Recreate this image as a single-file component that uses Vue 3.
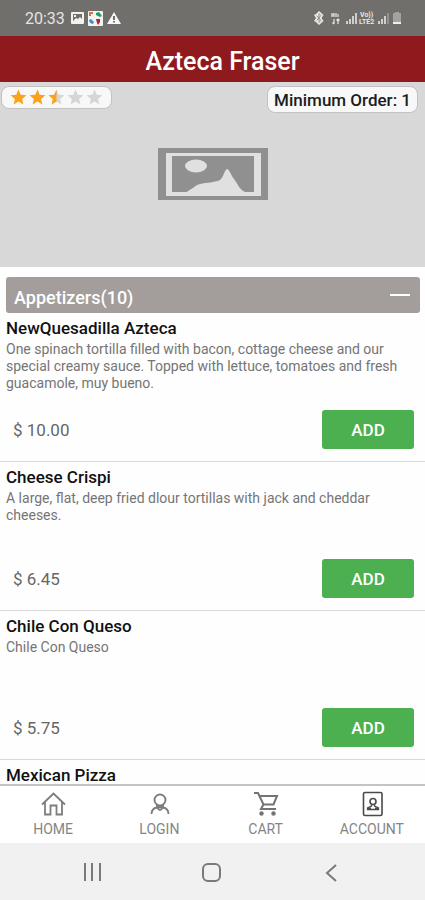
<script setup>
import { ref } from 'vue'

const open = ref(true)
const stars = ['full', 'full', 'half', 'empty', 'empty']
const items = [
  {
    name: 'NewQuesadilla Azteca',
    text: 'One spinach tortilla filled with bacon, cottage cheese and our special creamy sauce. Topped with lettuce, tomatoes and fresh guacamole, muy bueno.',
    price: '10.00',
  },
  {
    name: 'Cheese Crispi',
    text: 'A large, flat, deep fried dlour tortillas with jack and cheddar cheeses.',
    price: '6.45',
  },
  { name: 'Chile Con Queso', text: 'Chile Con Queso', price: '5.75' },
  { name: 'Mexican Pizza', text: '', price: '' },
]
</script>

<template>
  <div class="app">
    <div class="status">
      <span class="clock">20:33</span>
      <svg class="s-pic" width="13" height="12" viewBox="0 0 13 12">
        <path fill="#f2f2f2" fill-rule="evenodd" d="M1 0h11q1 0 1 1v10q0 1-1 1H1q-1 0-1-1V1q0-1 1-1zM2 2v7h9V2z" />
        <path fill="#f2f2f2" d="M2 9l3-3 2 1 2-2 2 2v2zM3 3h2v2H3z" />
      </svg>
      <svg class="s-app" width="15" height="15" viewBox="0 0 15 15">
        <rect width="15" height="15" rx="1" fill="#f4f4f2" />
        <path fill="#e2694b" d="M1 1h4v2H3v2H1z" />
        <path fill="#1e9a6c" d="M8 2l3-1 3 4-2 1-4-2z" />
        <path fill="#3f8fc8" d="M1 9l2-1 3 3-1 2-3-1z" />
        <path fill="#b3222e" d="M8 8h4v3l-2 3-1-2z" />
      </svg>
      <svg class="s-warn" width="14" height="12" viewBox="0 0 14 12">
        <path fill="#f7f7f7" d="M7 0l7 12H0z" />
        <path fill="#706f6c" d="M6 4h2v4H6zM6 9h2v1.500H6z" />
      </svg>
      <span class="gap"></span>
      <svg width="91" height="14" viewBox="0 0 91 14">
        <path fill="#ececec" d="M7 0l4.500 4-2 3 2 3L7 14l-3-3-2-1 2-3-2-3 2-1z" />
        <path fill="none" stroke="#8f8e8b" d="M4.500 4.500l4.500 5-2 2v-9l2 2-4.500 5" />
        <g fill="none" stroke="#e6e6e6">
          <path stroke-width="1.200" d="M20 2v4M22 2v4M20 4h2M24 2v4M26 3v3M22 8v5M20.500 11.500L22 13M26 13V8M24.500 9.500L26 8l1.500 1.500" />
          <path stroke-width="1.600" d="M35 13v-3M38 13V8M41 13V5M44 13V2" />
        </g>
        <g fill="#e6e6e6" font-family="Roboto, sans-serif" font-size="7" font-weight="700">
          <text x="48" y="6">Vo))</text>
          <text x="47" y="13">LTE2</text>
        </g>
        <path fill="none" stroke="#e6e6e6" stroke-width="1.600" d="M67 13v-3M70 13V8M73 13V5" />
        <path stroke="#9b9a98" stroke-width="1.600" d="M76 13V2" />
        <path fill="#a3a2a0" d="M81 2h2V1h4v1h2v9h-8z" />
        <path fill="#eee" d="M81 11h8v2h-8z" />
      </svg>
    </div>

    <header class="title-bar"><h1>Azteca Fraser</h1></header>

    <section class="hero">
      <div class="rating" role="img" aria-label="2.5 of 5">
        <svg v-for="(s, i) in stars" :key="i" width="19" height="17" viewBox="0 0 19 17">
          <path :fill="s === 'full' ? '#faa21b' : '#d6d6d6'" d="M9.500.5l2.200 5.200 5.700.5-4.300 3.800 1.300 5.500-4.900-3-4.900 3 1.300-5.500-4.300-3.800 5.700-.5z" />
          <path v-if="s === 'half'" fill="#faa21b" d="M9.500.5v12l-4.900 3 1.300-5.500-4.300-3.800 5.700-.5z" />
        </svg>
      </div>
      <svg class="placeholder" width="110" height="52" viewBox="0 0 110 52">
        <path fill="#909090" d="M0 0h110v52H0z" />
        <path fill="#e0e0e0" d="M8 5h95v43H8z" />
        <path fill="#909090" d="M14 8h82v36H14z" />
        <ellipse cx="38" cy="18" rx="11" ry="6.500" fill="#e0e0e0" />
        <path fill="#e0e0e0" d="M27 45c6-3 9-7 15-9 7-2 14-1 20-4 3-2 5-11 7-11s4 6 7 10c5 7 6 12 14 14z" />
      </svg>
      <div class="minimum">Minimum Order: 1</div>
    </section>

    <main class="menu">
      <button class="category" type="button" :aria-expanded="open" @click="open = !open">
        <span>Appetizers(10)</span>
        <i class="minus"></i>
      </button>
      <template v-if="open">
        <article v-for="item in items" :key="item.name" class="item">
          <h2>{{ item.name }}</h2>
          <p>{{ item.text }}</p>
          <div v-if="item.price" class="buy">
            <span class="price">$ {{ item.price }}</span>
            <button class="add" type="button">ADD</button>
          </div>
        </article>
      </template>
    </main>

    <nav class="tabs">
      <a href="#home">
        <svg width="26" height="26" viewBox="0 0 26 26" fill="none" stroke="#7d7d7d" stroke-width="1.800">
          <path d="M2 13.500L13.500 2.500 25 13.500M5 11v12.500h5.500V14.500h6v9h5.500V11" />
        </svg>
        <span>HOME</span>
      </a>
      <a href="#login">
        <svg width="26" height="26" viewBox="0 0 26 26" fill="none" stroke="#7d7d7d" stroke-width="1.900">
          <circle cx="14" cy="9" r="5.500" />
          <path d="M5.500 23c0-3.500 1.500-5.500 5-6.500l3.500 2.500 3.500-2.500c3.500 1 5 3 5 6.500M11 13v4M17 13v4M11.500 16h5" />
        </svg>
        <span>LOGIN</span>
      </a>
      <a href="#cart">
        <svg width="26" height="26" viewBox="0 0 26 26" fill="none" stroke="#737373" stroke-width="2">
          <path d="M1 2h4l5.500 11.500h10L24 5H7M10.500 13.500L8 18h15" />
          <circle cx="8.500" cy="22.500" r="2.200" fill="#737373" stroke="none" />
          <circle cx="20.500" cy="22.500" r="2.200" fill="#737373" stroke="none" />
        </svg>
        <span>CART</span>
      </a>
      <a href="#account">
        <svg width="26" height="26" viewBox="0 0 26 26" fill="none" stroke="#4a4a4a" stroke-width="1.600">
          <rect x="4.500" y="1.500" width="18.500" height="23" rx="1.500" />
          <circle cx="14" cy="10.500" r="3" />
          <path stroke-width="1.300" d="M12.500 13v2l-4 2v1.500h11V17l-4-2v-2" />
          <path d="M9 17.500h3M16 17.500h3" stroke-width="2" />
        </svg>
        <span>ACCOUNT</span>
      </a>
    </nav>

    <div class="system">
      <button type="button" aria-label="Recents">
        <svg width="22" height="22" viewBox="0 0 22 22" stroke="#7a7a7a" stroke-width="2"><path d="M3 2v18M10 2v18M18 2v18" /></svg>
      </button>
      <button type="button" aria-label="Home">
        <svg width="22" height="22" viewBox="0 0 22 22" fill="none" stroke="#7a7a7a" stroke-width="2"><rect x="2" y="3" width="17" height="17" rx="5" /></svg>
      </button>
      <button type="button" aria-label="Back">
        <svg width="22" height="22" viewBox="0 0 22 22" fill="none" stroke="#7a7a7a" stroke-width="2"><path d="M15 4l-9 8 9 8" /></svg>
      </button>
    </div>
  </div>
</template>

<style>
body {
  margin: 0;
  background: #fff;
}
</style>

<style scoped>
.app {
  display: flex;
  flex-direction: column;
  height: 100vh;
  overflow: hidden;
  font-family: Roboto, 'Liberation Sans', sans-serif;
  background: #fefefe;
}
h1, h2, p {
  margin: 0;
}
button {
  font-family: inherit;
  border: 0;
  padding: 0;
}
.status {
  display: flex;
  flex: none;
  align-items: center;
  height: 36px;
  padding: 0 22px 0 25px;
  background: #706f6c;
  color: #e4e4e4;
}
.clock {
  font-size: 16px;
  margin-right: 6px;
}
.s-app {
  margin: 0 4px;
}
.gap {
  flex: 1;
}
.title-bar {
  flex: none;
  height: 46px;
  padding-left: 20px;
  background: #8f1a1e;
  text-align: center;
}
h1 {
  font-size: 25px;
  font-weight: 500;
  line-height: 52px;
  color: #fff;
}
.hero {
  display: flex;
  flex: none;
  justify-content: space-between;
  position: relative;
  height: 185px;
  box-sizing: border-box;
  padding: 4px 7px 0 1px;
  background: #d8d8d8;
}
.rating,
.minimum {
  display: flex;
  align-items: center;
  box-sizing: border-box;
  border: 1px solid #c2c2c2;
  border-radius: 8px;
  background: #f8f8f8;
}
.rating {
  height: 23px;
  padding: 0 7px;
}
.minimum {
  height: 27px;
  padding: 0 6px;
  font-size: 17px;
  font-weight: 500;
  color: #1c1c1c;
}
.placeholder {
  position: absolute;
  top: 66px;
  left: 50%;
  transform: translateX(-50%);
}
.menu {
  flex: 1;
  min-height: 0;
  overflow: hidden;
  padding-top: 10px;
}
.category {
  display: flex;
  align-items: center;
  justify-content: space-between;
  width: calc(100% - 11px);
  height: 36px;
  margin: 0 5px 0 6px;
  padding: 4px 10px 0 8px;
  border-radius: 3px;
  background: #a39d9c;
  color: #fff;
  font-size: 18px;
  font-weight: 500;
}
.minus {
  width: 20px;
  height: 2px;
  margin-bottom: 4px;
  background: #fff;
}
.item {
  display: flex;
  flex-direction: column;
  box-sizing: border-box;
  height: 149px;
  padding: 4px 11px 12px 6px;
  border-bottom: 1px solid #d9d9d9;
}
h2 {
  font-size: 17px;
  font-weight: 500;
  line-height: 22px;
  color: #111;
}
.item p {
  padding-top: 2px;
  font-size: 14px;
  line-height: 17px;
  color: #757575;
}
.buy {
  display: flex;
  align-items: center;
  justify-content: space-between;
  margin-top: auto;
  padding-left: 7px;
}
.price {
  font-size: 17px;
  color: #666;
}
.add {
  width: 92px;
  height: 39px;
  border-radius: 3px;
  background: #4caf50;
  color: #fff;
  font-size: 17px;
  font-weight: 500;
}
.tabs {
  display: grid;
  grid-template-columns: repeat(4, 1fr);
  flex: none;
  height: 57px;
  border-top: 2px solid #c4c4c4;
  background: #fff;
}
.tabs a {
  display: flex;
  flex-direction: column;
  align-items: center;
  padding-top: 5px;
  text-decoration: none;
  color: #858585;
  font-size: 14px;
  line-height: 24px;
}
.system {
  display: flex;
  flex: none;
  align-items: center;
  justify-content: space-around;
  height: 57px;
  padding: 0 33px;
  background: #f1f1f1;
}
.system button {
  display: flex;
  background: none;
}
</style>
